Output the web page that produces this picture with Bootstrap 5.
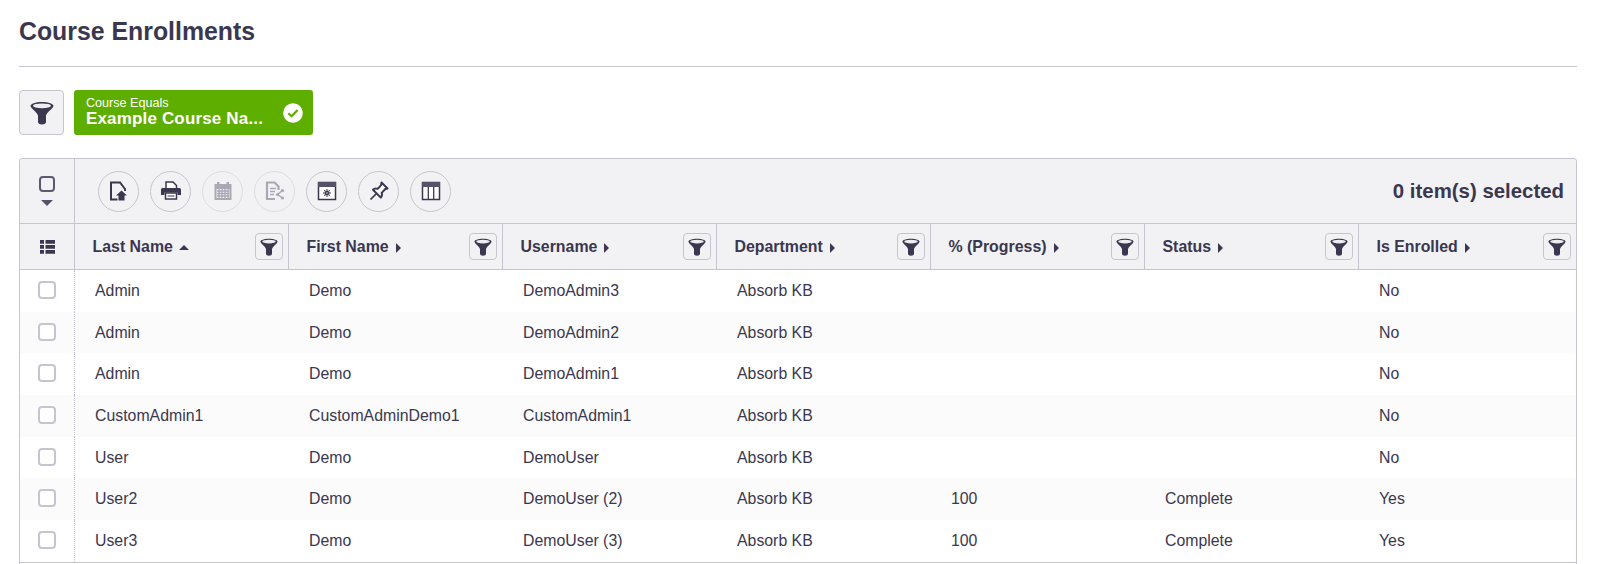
<!DOCTYPE html>
<html lang="en"><head><meta charset="utf-8"><title>Course Enrollments</title>
<link href="https://cdn.jsdelivr.net/npm/bootstrap@5.3.0/dist/css/bootstrap.min.css" rel="stylesheet">
<style>
body{font-family:"Liberation Sans",Arial,sans-serif;color:#3a374f;background:#fff;font-size:16px;overflow:hidden}
.page-wrap{padding:18px 20px 0 19px}
.page-title{font-size:24.85px;font-weight:700;line-height:27px;margin:0;color:#3a374f}
.title-rule{margin:21px 0 23px;border:0;border-top:1px solid #c6c4cf;opacity:1}
.filter-row{gap:10px}
.filter-btn{width:45px;height:45px;background:#f2f2f5;border:1px solid #c6c4cf;border-radius:4px;padding:0}
.chip{width:239px;height:45px;background:#5eae00;color:#fff;border-radius:3px;padding:0 10px 0 12px}
.chip-small{font-size:12.6px;line-height:14px;margin-top:-2px}
.chip-big{font-size:17px;font-weight:700;line-height:17px;letter-spacing:.16px}
.grid-box{margin-top:23px;border:1px solid #c6c4cf;border-bottom:0;border-radius:4px 4px 0 0;overflow:hidden}
.tool-row{height:65px;background:#f2f2f5;border-bottom:1px solid #c6c4cf}
.sel-cell{width:55px;border-right:1px solid #c6c4cf;flex:none}
.tool-icons{padding-left:23px;gap:11px}
.tool-round{width:41px;height:41px;border:1px solid #c6c4cf;border-radius:50%;background:transparent;padding:0}
.tool-round.off{border-color:#dcdbe2}
.sel-count{font-size:20.4px;font-weight:700;padding-right:12px}
.enroll-table{table-layout:fixed;width:100%;margin:0;--bs-table-bg:transparent;color:#3a374f;border-collapse:separate;border-spacing:0}
.enroll-table th{height:46px;background:#f2f2f5;border:0;border-bottom:1px solid #c6c4cf;border-right:1px solid #c6c4cf;padding:0 5px 0 17.5px;font-size:15.9px;font-weight:700;vertical-align:middle;color:#3a374f}
.enroll-table th:last-child{border-right:0}
.enroll-table th.first-col{padding:0;text-align:center}
.enroll-table td{height:41.7px;padding:0 0 0 20px;font-size:15.85px;vertical-align:middle;background:#fff;color:#3a374f;border:0}
.enroll-table tr:nth-child(even) td{background:#fbfbfc}
.enroll-table td.first-col{padding:0 0 2px;text-align:center;border-right:1px dotted #c6c4cf;line-height:0}
.head-filter{width:28px;height:27px;background:#f2f2f5;border:1px solid #c6c4cf;border-radius:4px;padding:0;flex:none}
.box-check{display:inline-block;width:18px;height:18px;border:2px solid #c6c4cf;border-radius:4px;background:#fff}
.main-check{display:block;width:16px;height:16px;border:2.5px solid #5c5a70;border-radius:4px}
.caret-down{width:0;height:0;border-left:6px solid transparent;border-right:6px solid transparent;border-top:6px solid #55526a;margin-top:8px}
.sort-up,.sort-right{display:inline-block;width:0;height:0;margin-left:6px;vertical-align:2px}
.sort-up{border-left:5px solid transparent;border-right:5px solid transparent;border-bottom:5px solid #3a374f}
.sort-right{border-top:5px solid transparent;border-bottom:5px solid transparent;border-left:5px solid #3a374f;margin-left:7px;vertical-align:-1px}
.grid-foot{height:3px;border-top:1px solid #c6c4cf}
.svg-defs{position:absolute}
</style></head><body>
<svg width="0" height="0" class="svg-defs"><defs>
<symbol id="ic-funnel" viewBox="0 0 24 24"><path d="M.5 5C.5 2.800 5.500 1 12 1s11.500 1.800 11.500 4c-1 3-6.500 6-7.500 9.500V21c0 1.500-1.500 2.500-4 2.500S8 22.500 8 21v-6.500C7 11 1.500 8 .5 5z" fill="#3a374f"/><ellipse cx="12" cy="4.800" rx="9" ry="2.400" fill="#eeeef2"/></symbol>
</defs></svg>
<div class="page-wrap">
<h1 class="page-title">Course Enrollments</h1>
<hr class="title-rule">
<div class="d-flex filter-row align-items-center">
<button class="filter-btn d-flex align-items-center justify-content-center" type="button" aria-label="Filter"><svg width="24" height="24"><use href="#ic-funnel"/></svg></button>
<div class="chip d-flex align-items-center justify-content-between">
<div><div class="chip-small">Course Equals</div><div class="chip-big">Example Course Na...</div></div>
<svg width="20" height="20" viewBox="0 0 20 20"><circle cx="10" cy="10" r="9.800" fill="#fff"/><path d="M5.300 10.200l3.300 3.100 6-6.200" fill="none" stroke="#5eae00" stroke-width="2.200"/></svg>
</div></div>
<div class="grid-box">
<div class="tool-row d-flex align-items-center">
<div class="sel-cell h-100 d-flex flex-column align-items-center justify-content-center"><span class="main-check"></span><span class="caret-down"></span></div>
<div class="tool-icons d-flex flex-grow-1">
<button class="tool-round d-flex align-items-center justify-content-center" type="button" aria-label="Export"><svg width="20" height="20" viewBox="0 0 20 20"><path d="M8.500 18.500H2V1.500h9l5 6.500v2" fill="none" stroke="#3a374f" stroke-width="2"/><path d="M12.500 9.500l5.500 5h-2.500V19.500h-6V14.500H7z" fill="#3a374f"/></svg></button>
<button class="tool-round d-flex align-items-center justify-content-center" type="button" aria-label="Print"><svg width="20" height="20" viewBox="0 0 20 20"><path d="M5 1h7l3.500 3.500V8H5z" fill="#fff" stroke="#3a374f" stroke-width="1.500"/><path d="M1.500 7h17A1.500 1.500 0 0 1 20 8.500V14h-3.500v-2.500h-13V14H0V8.500A1.500 1.500 0 0 1 1.500 7z" fill="#3a374f"/><rect x="4.500" y="12" width="11" height="6" fill="#fff" stroke="#3a374f" stroke-width="1.500"/><path d="M6.500 15h7" stroke="#3a374f"/></svg></button>
<button class="tool-round off d-flex align-items-center justify-content-center" type="button" aria-label="Schedule"><svg width="20" height="20" viewBox="0 0 20 20"><rect x="1.500" y="3" width="17" height="16" fill="#a9a8b4"/><rect x="4" y="1" width="2.500" height="4" fill="#a9a8b4"/><rect x="13.500" y="1" width="2.500" height="4" fill="#a9a8b4"/><path d="M3.500 8h13v9h-13z" fill="#f2f2f5"/><path d="M4 10h12M4 12.500h12M4 15h12" stroke="#a9a8b4" stroke-width="1.300"/><path d="M6 8v9M9 8v9M12 8v9M15 8v9" stroke="#a9a8b4" stroke-width="1.300"/></svg></button>
<button class="tool-round off d-flex align-items-center justify-content-center" type="button" aria-label="Share"><svg width="20" height="20" viewBox="0 0 20 20"><path d="M10 18H2V1.500h7.500l4 4V9" fill="none" stroke="#a9a8b4" stroke-width="2.200"/><path d="M5 7.500h6M5 10.500h5M5 13.500h4" stroke="#a9a8b4" stroke-width="1.500"/><path d="M17.500 9.500l-5 4 5 3.500" fill="none" stroke="#a9a8b4" stroke-width="1.500"/><circle cx="17.500" cy="9.500" r="1.600" fill="#a9a8b4"/><circle cx="12.500" cy="13.500" r="1.600" fill="#a9a8b4"/><circle cx="17.500" cy="17" r="1.600" fill="#a9a8b4"/></svg></button>
<button class="tool-round d-flex align-items-center justify-content-center" type="button" aria-label="Settings"><svg width="20" height="20" viewBox="0 0 20 20"><rect x="1.500" y="1.500" width="17" height="17" fill="#fff" stroke="#3a374f" stroke-width="1.500"/><rect x="1" y="1" width="18" height="5" fill="#55526a"/><circle cx="10" cy="12" r="2.200" fill="#3a374f"/><circle cx="10" cy="12" r=".7" fill="#fff"/><path d="M10 8.300v1.400M10 14.300v1.400M6.300 12h1.400M12.300 12h1.400M7.400 9.400l1 1M11.600 13.600l1 1M7.400 14.600l1-1M11.600 10.400l1-1" stroke="#3a374f" stroke-width="1.300"/></svg></button>
<button class="tool-round d-flex align-items-center justify-content-center" type="button" aria-label="Pin"><svg width="20" height="20" viewBox="0 0 20 20"><path d="M12.500 1.500l6 6-2.200.5-3.600 3.900c.6 2 .2 3.600-.9 4.700L4 8.800c1.200-1.200 2.800-1.500 4.700-.9l3.400-3.800z" fill="#fff" stroke="#3a374f" stroke-width="2" stroke-linejoin="round"/><path d="M7.500 12.500L1.500 18.500" stroke="#3a374f" stroke-width="1.700"/></svg></button>
<button class="tool-round d-flex align-items-center justify-content-center" type="button" aria-label="Columns"><svg width="20" height="20" viewBox="0 0 20 20"><rect x="1.500" y="1.500" width="17" height="17" fill="#fff" stroke="#3a374f" stroke-width="1.500"/><rect x="1" y="1" width="18" height="5" fill="#55526a"/><path d="M7.300 6v13M12.700 6v13" stroke="#3a374f" stroke-width="1.300"/></svg></button>
</div>
<div class="sel-count">0 item(s) selected</div>
</div>
<table class="table enroll-table">
<colgroup><col style="width:55px"><col style="width:214px"><col style="width:214px"><col style="width:214px"><col style="width:214px"><col style="width:214px"><col style="width:214px"><col></colgroup>
<thead><tr>
<th class="first-col"><svg width="15" height="14" viewBox="0 0 15 14"><path d="M0 0h4v3.800H0zM5.500 0H15v3.800H5.500zM0 5h4v3.800H0zM5.500 5H15v3.800H5.500zM0 10h4v3.800H0zM5.500 10H15v3.800H5.500z" fill="#3a374f"/></svg></th>
<th><div class="d-flex align-items-center justify-content-between"><span>Last Name<span class="sort-up"></span></span><button class="head-filter d-flex align-items-center justify-content-center" type="button" aria-label="Filter Last Name"><svg width="18" height="18"><use href="#ic-funnel"/></svg></button></div></th>
<th><div class="d-flex align-items-center justify-content-between"><span>First Name<span class="sort-right"></span></span><button class="head-filter d-flex align-items-center justify-content-center" type="button" aria-label="Filter First Name"><svg width="18" height="18"><use href="#ic-funnel"/></svg></button></div></th>
<th><div class="d-flex align-items-center justify-content-between"><span>Username<span class="sort-right"></span></span><button class="head-filter d-flex align-items-center justify-content-center" type="button" aria-label="Filter Username"><svg width="18" height="18"><use href="#ic-funnel"/></svg></button></div></th>
<th><div class="d-flex align-items-center justify-content-between"><span>Department<span class="sort-right"></span></span><button class="head-filter d-flex align-items-center justify-content-center" type="button" aria-label="Filter Department"><svg width="18" height="18"><use href="#ic-funnel"/></svg></button></div></th>
<th><div class="d-flex align-items-center justify-content-between"><span>% (Progress)<span class="sort-right"></span></span><button class="head-filter d-flex align-items-center justify-content-center" type="button" aria-label="Filter Progress"><svg width="18" height="18"><use href="#ic-funnel"/></svg></button></div></th>
<th><div class="d-flex align-items-center justify-content-between"><span>Status<span class="sort-right"></span></span><button class="head-filter d-flex align-items-center justify-content-center" type="button" aria-label="Filter Status"><svg width="18" height="18"><use href="#ic-funnel"/></svg></button></div></th>
<th><div class="d-flex align-items-center justify-content-between"><span>Is Enrolled<span class="sort-right"></span></span><button class="head-filter d-flex align-items-center justify-content-center" type="button" aria-label="Filter Is Enrolled"><svg width="18" height="18"><use href="#ic-funnel"/></svg></button></div></th>
</tr></thead>
<tbody>
<tr><td class="first-col"><span class="box-check"></span></td><td>Admin</td><td>Demo</td><td>DemoAdmin3</td><td>Absorb KB</td><td></td><td></td><td>No</td></tr>
<tr><td class="first-col"><span class="box-check"></span></td><td>Admin</td><td>Demo</td><td>DemoAdmin2</td><td>Absorb KB</td><td></td><td></td><td>No</td></tr>
<tr><td class="first-col"><span class="box-check"></span></td><td>Admin</td><td>Demo</td><td>DemoAdmin1</td><td>Absorb KB</td><td></td><td></td><td>No</td></tr>
<tr><td class="first-col"><span class="box-check"></span></td><td>CustomAdmin1</td><td>CustomAdminDemo1</td><td>CustomAdmin1</td><td>Absorb KB</td><td></td><td></td><td>No</td></tr>
<tr><td class="first-col"><span class="box-check"></span></td><td>User</td><td>Demo</td><td>DemoUser</td><td>Absorb KB</td><td></td><td></td><td>No</td></tr>
<tr><td class="first-col"><span class="box-check"></span></td><td>User2</td><td>Demo</td><td>DemoUser (2)</td><td>Absorb KB</td><td>100</td><td>Complete</td><td>Yes</td></tr>
<tr><td class="first-col"><span class="box-check"></span></td><td>User3</td><td>Demo</td><td>DemoUser (3)</td><td>Absorb KB</td><td>100</td><td>Complete</td><td>Yes</td></tr>
</tbody></table>
<div class="grid-foot"></div>
</div></div>
</body></html>
